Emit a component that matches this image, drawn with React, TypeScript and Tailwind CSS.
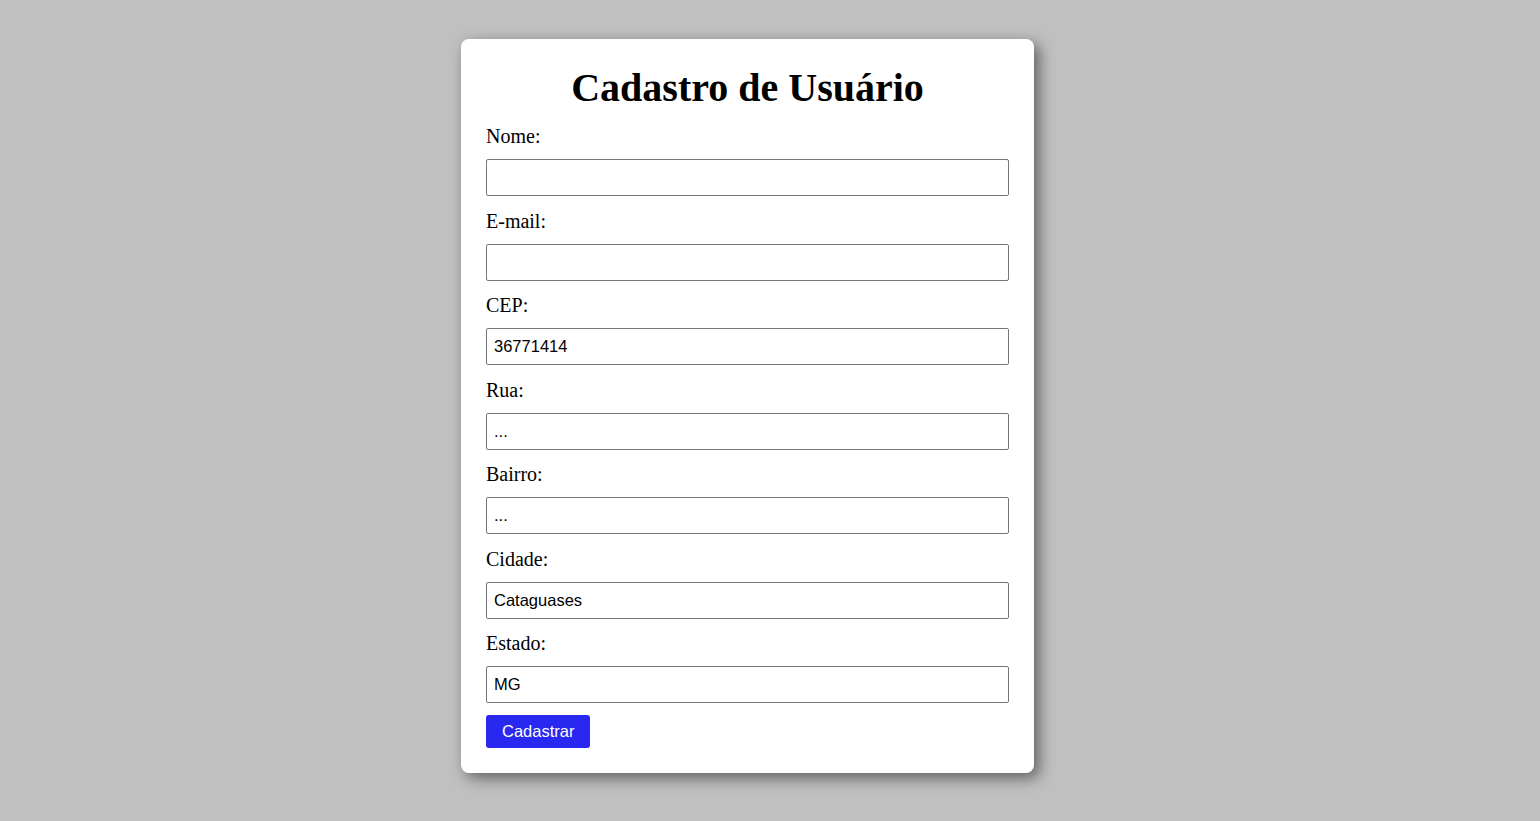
import type { ReactNode } from "react";

const fields: { label: string; value: string }[] = [
  { label: "Nome:", value: "" },
  { label: "E-mail:", value: "" },
  { label: "CEP:", value: "36771414" },
  { label: "Rua:", value: "..." },
  { label: "Bairro:", value: "..." },
  { label: "Cidade:", value: "Cataguases" },
  { label: "Estado:", value: "MG" },
];

function Field({ label, children }: { label: string; children: ReactNode }) {
  return (
    <div className="flex flex-col">
      <label className="text-[20px] leading-[23px] text-black mb-[11px] font-['Liberation_Serif',serif]">
        {label}
      </label>
      {children}
    </div>
  );
}

export default function App() {
  return (
    <div className="min-h-[821px] w-full bg-[#c0c0c0] flex justify-center pt-[39px] pr-[45px] font-['Liberation_Serif',serif]">
      <form className="w-[573px] h-fit bg-white rounded-lg p-[25px] shadow-[5px_5px_15px_rgba(0,0,0,0.5)]">
        <h1 className="text-[40px] leading-[48px] font-bold text-center text-black mb-[13px]">
          Cadastro de Usuário
        </h1>
        <div className="flex flex-col gap-[13.5px]">
          {fields.map((f) => (
            <Field key={f.label} label={f.label}>
              <input
                type="text"
                defaultValue={f.value}
                className="h-[37px] w-full border border-[#767676] rounded-[2px] pl-[7px] pr-2 text-[16.5px] text-black font-['Liberation_Sans',Arial,sans-serif] outline-none"
              />
            </Field>
          ))}
          <div className="-mt-[1.5px]">
            <button
              type="button"
              className="h-[33px] px-4 bg-[#2828f0] text-white rounded-[3px] text-[16.5px] font-['Liberation_Sans',Arial,sans-serif]"
            >
              Cadastrar
            </button>
          </div>
        </div>
      </form>
    </div>
  );
}
